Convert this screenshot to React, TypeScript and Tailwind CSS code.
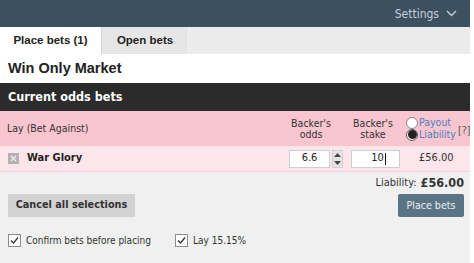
import React from "react";

const tah = "font-['DejaVu_Sans_Condensed','DejaVu_Sans',sans-serif]";
const ari = "font-['Liberation_Sans',Arial,sans-serif]";

function Check() {
  return (
    <span className="w-[13px] h-[13px] border border-[#8d8d8d] bg-white flex items-center justify-center shrink-0">
      <svg width="11" height="11" viewBox="0 0 11 11">
        <path d="M2 5.5 L4.5 8 L9 2.5" fill="none" stroke="#333" strokeWidth="1.3" />
      </svg>
    </span>
  );
}

export default function App() {
  return (
    <div className="w-[474px] h-[263px] bg-white flex overflow-hidden">
      <div className="w-[470px] h-full flex flex-col">
        {/* top bar */}
        <div className={`h-[27px] bg-[#3c5062] flex items-center justify-end pr-[13px] text-[#c5ced6] text-[12px] ${tah}`}>
          <span>Settings</span>
          <svg className="ml-[7px]" width="11" height="7" viewBox="0 0 11 7">
            <path d="M1 1 L5.5 5.5 L10 1" fill="none" stroke="#c5ced6" strokeWidth="1.4" />
          </svg>
        </div>
        {/* tabs */}
        <div className={`h-[27px] bg-[#ebebeb] flex text-[11.5px] font-bold text-[#222] ${ari}`}>
          <div className="w-[102px] bg-white border-r border-[#d6d6d6] flex items-center justify-center pt-[1px]">
            Place bets (1)
          </div>
          <div className="w-[87px] bg-[#e6e6e6] border-r border-[#f4f4f4] flex items-center justify-center pt-[1px]">
            Open bets
          </div>
        </div>
        {/* title */}
        <div className={`h-[29px] bg-white flex items-center pl-[8px] text-[14.5px] font-bold text-[#222] ${ari}`}>
          Win Only Market
        </div>
        {/* dark bar */}
        <div className={`h-[28px] bg-[#2b2b2b] flex items-center pl-[8px] text-[12.5px] font-bold text-white ${tah}`}>
          Current odds bets
        </div>
        {/* pink header */}
        <div className={`h-[35px] bg-[#f9c6d0] flex items-center text-[10.5px] text-[#333] ${tah}`}>
          <div className="flex-1 pl-[7px]">Lay (Bet Against)</div>
          <div className="w-[58px] text-center leading-[11px]">
            Backer's
            <br />
            odds
          </div>
          <div className="ml-[6px] w-[54px] text-center leading-[11px]">
            Backer's
            <br />
            stake
          </div>
          <div className="ml-[4px] w-[54px] flex flex-col pl-[2px]">
            <div className="flex items-center h-[12px]">
              <span className="w-[12px] h-[12px] rounded-full border border-[#888] bg-white shrink-0" />
              <span className="ml-[1px] text-[#4d7dc2]">Payout</span>
            </div>
            <div className="flex items-center h-[12px]">
              <span className="w-[12px] h-[12px] rounded-full border border-[#555] bg-white shrink-0 flex items-center justify-center">
                <span className="w-[9px] h-[9px] rounded-full bg-[#222]" />
              </span>
              <span className="ml-[1px] text-[#4d7dc2]">Liability</span>
            </div>
          </div>
          <div className="w-[12px] text-[#555] pt-[4px]">[?]</div>
        </div>
        {/* selection row */}
        <div className={`h-[26px] bg-[#fde6eb] border-b border-[#f6d4da] flex items-center pl-[8px] ${tah}`}>
          <span className="w-[11px] h-[11px] bg-[#b3b3b3] flex items-center justify-center shrink-0">
            <svg width="7" height="7" viewBox="0 0 7 7">
              <path d="M1 1 L6 6 M6 1 L1 6" stroke="#eee" strokeWidth="1.3" />
            </svg>
          </span>
          <span className="ml-[8px] flex-1 text-[11px] font-bold text-[#222]">War Glory</span>
          <div className="w-[41px] h-[18px] bg-white border border-[#cfcfcf] flex items-center justify-center text-[11px] text-[#222]">
            6.6
          </div>
          <div className="ml-[2px] w-[11px] h-[18px] bg-[#e4e4e4] border border-[#cfcfcf] flex flex-col items-center justify-around">
            <svg width="7" height="4" viewBox="0 0 7 4">
              <path d="M0 4 L3.5 0 L7 4 Z" fill="#444" />
            </svg>
            <svg width="7" height="4" viewBox="0 0 7 4">
              <path d="M0 0 L3.5 4 L7 0 Z" fill="#444" />
            </svg>
          </div>
          <div className="ml-[8px] w-[49px] h-[18px] bg-white border border-[#cfcfcf] flex items-center justify-center text-[11px] text-[#222]">
            <span className="pl-[6px]">10</span>
            <span className="w-[1px] h-[12px] bg-black ml-[1px]" />
          </div>
          <div className="w-[70px] pl-[19px] text-[11px] text-[#333]">£56.00</div>
        </div>
        {/* bottom */}
        <div className={`flex-1 bg-[#f0f0f0] flex flex-col pl-[8px] pr-[6px] ${tah}`}>
          <div className="h-[22px] flex items-center justify-end text-[#333] pt-[1px]">
            <span className="text-[11px]">Liability:</span>
            <span className="ml-[4px] text-[12.5px] font-bold">£56.00</span>
          </div>
          <div className="flex justify-between">
            <div className="w-[127px] h-[23px] bg-[#d2d2d2] flex items-center justify-center text-[10.8px] font-bold text-[#333]">
              Cancel all selections
            </div>
            <div className="w-[66px] h-[23px] bg-[#5a7385] rounded-[2px] flex items-center justify-center text-[10.6px] text-[#eef2f5]">
              Place bets
            </div>
          </div>
          <div className="mt-[16px] flex items-center text-[10px] text-[#333]">
            <Check />
            <span className="ml-[5px]">Confirm bets before placing</span>
            <span className="ml-[24px]" />
            <Check />
            <span className="ml-[5px]">Lay 15.15%</span>
          </div>
        </div>
      </div>
    </div>
  );
}
